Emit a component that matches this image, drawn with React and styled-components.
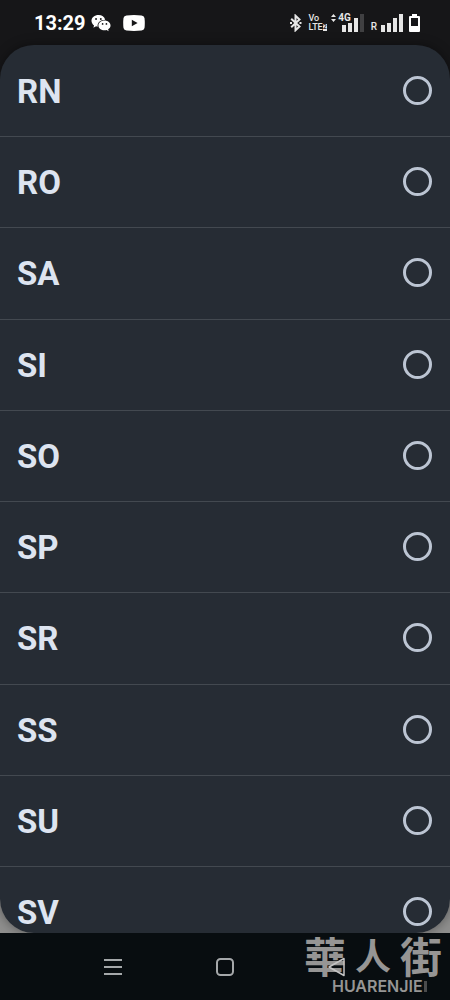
import { useState } from "react";
import styled, { createGlobalStyle } from "styled-components";

const provinces = ["RN", "RO", "SA", "SI", "SO", "SP", "SR", "SS", "SU", "SV"];

const GlobalStyle = createGlobalStyle`
  * {
    box-sizing: border-box;
  }

  body {
    margin: 0;
    background: #080d10;
    font-family: Roboto, "Liberation Sans", sans-serif;
  }
`;

const Screen = styled.div`
  display: flex;
  flex-direction: column;
  height: 100vh;
  overflow: hidden;
`;

const StatusBar = styled.header`
  display: flex;
  justify-content: space-between;
  align-items: center;
  height: 45px;
  padding: 0 30px 0 34px;
  background: #161618;
  color: #fff;
`;

const StatusGroup = styled.div`
  display: flex;
  align-items: center;
`;

const IconSlot = styled.span`
  display: flex;
  margin-left: ${(p) => p.$before}px;
`;

const Clock = styled.time`
  font-size: 20px;
  font-weight: 700;
  line-height: 24px;
`;

const Volte = styled.div`
  display: flex;
  flex-direction: column;
  margin-left: 6px;
  color: #e6e6e6;
  font-size: 9px;
  font-weight: 500;
  line-height: 9px;
`;

const VolteLine = styled.span`
  display: flex;
  align-items: center;
`;

const SimBadge = styled.span`
  background: #e6e6e6;
  color: #161618;
  font-size: 7px;
  line-height: 7px;
`;

const Signal = styled.div`
  position: relative;
  display: flex;
  align-items: flex-end;
  gap: 2px;
  height: 18px;
  margin-left: ${(p) => p.$before}px;
`;

const Bar = styled.span`
  width: 4px;
  height: ${(p) => p.$height}px;
  background: ${(p) => (p.$off ? "#404042" : "#e6e6e6")};
`;

const NetworkType = styled.span`
  position: absolute;
  top: -1px;
  right: 13px;
  display: flex;
  align-items: center;
  gap: 2px;
  color: #e6e6e6;
  font-size: 10px;
  font-weight: 700;
  line-height: 10px;
`;

const Roaming = styled.span`
  align-self: flex-end;
  margin-left: 7px;
  color: #e6e6e6;
  font-size: 10px;
  font-weight: 500;
  line-height: 10px;
`;

const Backdrop = styled.main`
  flex: 1;
  min-height: 0;
  display: flex;
  background: linear-gradient(#161618 50%, #8f8f8e 50%);
`;

const Sheet = styled.fieldset`
  flex: 1;
  min-width: 0;
  display: grid;
  grid-template-rows: repeat(9, 1fr) 67px;
  margin: 0;
  padding: 0;
  border: 0;
  border-radius: 34px;
  overflow: hidden;
  background: #262c34;
  box-shadow: 0 0 12px rgba(0, 0, 0, 0.4);
`;

const Option = styled.label`
  display: flex;
  justify-content: space-between;
  align-items: flex-start;
  min-height: 0;
  padding: 26px 18px 0 17px;
  border-top: 1px solid #434950;
  overflow: hidden;
  color: #dde4f0;
  font-size: 33px;
  font-weight: 700;
  line-height: 40px;
  cursor: pointer;

  &:first-child {
    border-color: transparent;
  }
`;

const Radio = styled.input`
  appearance: none;
  width: 29px;
  height: 29px;
  margin: 4px 0 0;
  border: 3px solid #bcc5d3;
  border-radius: 50%;
  cursor: pointer;

  &:checked {
    background: radial-gradient(circle, #bcc5d3 45%, transparent 50%);
  }
`;

const NavBar = styled.nav`
  position: relative;
  display: flex;
  justify-content: center;
  align-items: center;
  gap: 88px;
  height: 67px;
  background: #080d10;
`;

const NavButton = styled.button`
  z-index: 1;
  display: flex;
  justify-content: center;
  align-items: center;
  width: 24px;
  height: 24px;
  padding: 0;
  border: 0;
  background: none;
  color: ${(p) => p.$color || "#a5a8aa"};
  cursor: pointer;
`;

const Watermark = styled.div`
  position: absolute;
  top: 0;
  right: 8px;
  color: #969594;
  pointer-events: none;
`;

const WatermarkName = styled.div`
  display: flex;
  align-items: center;
  justify-content: flex-end;
  gap: 9px;
  height: 43px;
  font-family: "Noto Sans CJK TC", sans-serif;
  font-weight: 700;
`;

const WatermarkChar = styled.span`
  font-size: ${(p) => p.$size}px;
  line-height: 43px;
`;

const WatermarkLatin = styled.div`
  display: flex;
  align-items: center;
  gap: 1px;
  padding-left: 28px;
  font-family: Inter, "Liberation Sans", sans-serif;
  font-size: 16px;
  font-weight: 600;
  line-height: 20px;
`;

const WatermarkTail = styled.span`
  width: 3px;
  height: 11px;
  background: #4a4b4c;
`;

function WeChatIcon() {
  return (
    <svg width="20" height="18" viewBox="0 0 21 18" aria-hidden="true">
      <path
        fill="#fff"
        d="M8 0.5C3.7 0.5 0.5 3.2 0.5 6.7c0 2 1 3.7 2.7 4.8L2.5 14l2.8-1.5c.6.2 1.1.3 1.700.4C6.300 8.600 9.800 5.500 14.900 5.500 14.200 2.500 11.400 0.500 8 0.500z"
      />
      <path
        fill="#fff"
        d="M14.200 6.300c-3.600 0-6.400 2.300-6.400 5.200s2.800 5.200 6.400 5.200c.8 0 1.500-.1 2.200-.3l2.100 1.200-.5-2c1.500-1 2.500-2.400 2.500-4.100 0-2.900-2.800-5.200-6.300-5.200z"
      />
      <g fill="#161618">
        <circle cx="5.300" cy="4.800" r="1" />
        <circle cx="10.300" cy="4.800" r="1" />
        <circle cx="12.200" cy="10" r="0.900" />
        <circle cx="16.200" cy="10" r="0.900" />
      </g>
    </svg>
  );
}

function VideoIcon() {
  return (
    <svg width="22" height="16" viewBox="0 0 22 16" aria-hidden="true">
      <path
        fill="#fff"
        d="M3.500 0.400Q11-.3 18.500.4 21 .6 21.500 3q.6 5 0 10-.5 2.400-3 2.600-7.500.7-15 0Q1 15.400.5 13q-.6-5 0-10Q1 .6 3.500.400z"
      />
      <path fill="#161618" d="M8.800 4.700v6.600L14.600 8z" />
    </svg>
  );
}

function BluetoothIcon() {
  return (
    <svg width="12" height="18" viewBox="0 0 12 18" aria-hidden="true">
      <path
        fill="none"
        stroke="#e6e6e6"
        strokeWidth="2"
        d="M1.200 4.800l8.300 7.800-4 3.700V1.700l4 3.700-8.300 7.800"
      />
      <path fill="#e6e6e6" d="M0 8h2v2H0zM9.500 8h2v2h-2z" />
    </svg>
  );
}

function BatteryIcon() {
  return (
    <svg width="11" height="18" viewBox="0 0 11 18" aria-hidden="true">
      <path
        fill="#fff"
        fillRule="evenodd"
        d="M3 0h5v2h2q1 0 1 1v14q0 1-1 1H1q-1 0-1-1V3q0-1 1-1h2zM2 4v8h7V4z"
      />
    </svg>
  );
}

export default function App() {
  const [selected, setSelected] = useState("");

  return (
    <>
      <GlobalStyle />
      <Screen>
        <StatusBar>
          <StatusGroup>
            <Clock>13:29</Clock>
            <IconSlot $before={5}>
              <WeChatIcon />
            </IconSlot>
            <IconSlot $before={12}>
              <VideoIcon />
            </IconSlot>
          </StatusGroup>
          <StatusGroup>
            <BluetoothIcon />
            <Volte>
              <span>Vo</span>
              <VolteLine>
                LTE<SimBadge>2</SimBadge>
              </VolteLine>
            </Volte>
            <Signal $before={15}>
              <NetworkType>
                <svg width="5" height="8" viewBox="0 0 5 8" aria-hidden="true">
                  <path fill="#e6e6e6" d="M0 3l2.500-3L5 3zM0 5l2.500 3L5 5z" />
                </svg>
                4G
              </NetworkType>
              <Bar $height={7} />
              <Bar $height={9} />
              <Bar $height={14} />
              <Bar $height={18} $off />
            </Signal>
            <Roaming>R</Roaming>
            <Signal $before={4}>
              <Bar $height={7} />
              <Bar $height={9} />
              <Bar $height={14} />
              <Bar $height={18} />
            </Signal>
            <IconSlot $before={6}>
              <BatteryIcon />
            </IconSlot>
          </StatusGroup>
        </StatusBar>

        <Backdrop>
          <Sheet aria-label="Province">
            {provinces.map((code) => (
              <Option key={code}>
                {code}
                <Radio
                  type="radio"
                  name="province"
                  value={code}
                  checked={selected === code}
                  onChange={() => setSelected(code)}
                />
              </Option>
            ))}
          </Sheet>
        </Backdrop>

        <NavBar>
          <NavButton type="button" aria-label="Recent apps">
            <svg width="18" height="18" viewBox="0 0 18 18">
              <path
                stroke="currentColor"
                strokeWidth="2"
                d="M0 2h18M0 9h18M0 16h18"
              />
            </svg>
          </NavButton>
          <NavButton type="button" aria-label="Home">
            <svg width="18" height="18" viewBox="0 0 18 18" fill="none">
              <rect
                x="1"
                y="1"
                width="16"
                height="16"
                rx="3.500"
                stroke="currentColor"
                strokeWidth="2"
              />
            </svg>
          </NavButton>
          <NavButton type="button" aria-label="Back" $color="#c4c4c4">
            <svg width="18" height="20" viewBox="0 0 18 20" fill="none">
              <path
                stroke="currentColor"
                strokeWidth="1.500"
                strokeLinejoin="round"
                d="M1 10L16 1.500v17z"
              />
            </svg>
          </NavButton>
          <Watermark>
            <WatermarkName>
              <WatermarkChar $size={42}>華</WatermarkChar>
              <WatermarkChar $size={36}>人</WatermarkChar>
              <WatermarkChar $size={42}>街</WatermarkChar>
            </WatermarkName>
            <WatermarkLatin>
              HUARENJIE
              <WatermarkTail />
            </WatermarkLatin>
          </Watermark>
        </NavBar>
      </Screen>
    </>
  );
}
